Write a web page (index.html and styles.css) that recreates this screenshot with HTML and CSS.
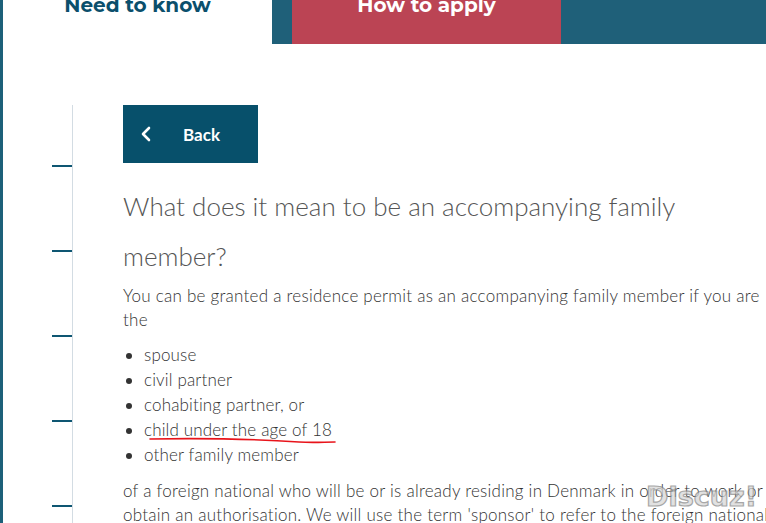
FILE: index.html
```html
<!DOCTYPE html>
<html>
<head>
  <meta charset="utf-8">
  <title>Accompanying family member</title>
  <link rel="stylesheet" href="styles.css">
</head>
<body>
  <div class="tabs">
    <div class="tab tab-know"><span>Need to know</span></div>
    <div class="tab-gap"></div>
    <div class="tab tab-apply"><span>How to apply</span></div>
    <div class="tab-rest"></div>
  </div>

  <div class="page">
    <div class="rail">
      <div class="tick"></div>
      <div class="tick"></div>
      <div class="tick"></div>
      <div class="tick"></div>
      <div class="tick"></div>
    </div>

    <div class="main">
      <a class="back-btn" href="#">
        <svg class="chev" width="10" height="16" viewBox="0 0 10 16">
          <path d="M8 2 L2 8 L8 14" fill="none" stroke="#fff" stroke-width="2.6" stroke-linecap="round" stroke-linejoin="round"/>
        </svg>
        <span>Back</span>
      </a>

      <h2 class="title">What does it mean to be an accompanying family member?</h2>

      <p class="text intro">You can be granted a residence permit as an accompanying family member if you are the</p>

      <ul class="list">
        <li>spouse</li>
        <li>civil partner</li>
        <li>cohabiting partner, or</li>
        <li class="marked">child under the age of 18
          <svg class="scribble" width="190" height="10" viewBox="0 0 190 10">
            <path d="M1 2 C60 1 120 3 150 5 C165 6 175 5 186 5" fill="none" stroke="#e8141b" stroke-width="1.6" stroke-linecap="round"/>
          </svg>
        </li>
        <li>other family member</li>
      </ul>

      <p class="text outro">of a foreign national who will be or is already residing in Denmark in order to work or obtain an authorisation. We will use the term 'sponsor' to refer to the foreign national that</p>
    </div>
  </div>

  <div class="watermark">Discuz!</div>
</body>
</html>
```

FILE: styles.css
```css
body{
    margin:0;
    width:766px;
    height:523px;
    overflow:hidden;
    border-left:3px solid #1d6079;
    box-sizing:border-box;
    font-family:"Lato","Noto Sans",sans-serif;
    background:#fff;
    position:relative;
}

.tabs{
    display:flex;
    height:44px;
}

.tab{
    width:269px;
    flex-shrink:0;
    display:flex;
    justify-content:center;
    align-items:flex-start;
    font-family:"Montserrat","Lato",sans-serif;
    font-weight:700;
    font-size:20px;
    overflow:hidden;
}

.tab span{
    margin-top:-7px;
    line-height:24px;
}

.tab-know{
    color:#0b4f6c;
    background:#fff;
}

.tab-gap{
    width:20px;
    flex-shrink:0;
    background:#1f6079;
}

.tab-apply{
    color:#fff;
    background:#bb4454;
}

.tab-rest{
    flex:1;
    background:#1f6079;
}

.page{
    display:flex;
}

.rail{
    width:70px;
    flex-shrink:0;
    margin-top:61px;
    border-right:1px solid #d3dce3;
    display:flex;
    flex-direction:column;
    align-items:flex-end;
    padding-top:60px;
    gap:83px;
    height:600px;
    box-sizing:border-box;
}

.tick{
    width:20px;
    height:2px;
    background:#0e5672;
}

.main{
    padding-left:50px;
    padding-top:61px;
    flex:1;
    min-width:0;
    color:#333;
}

.back-btn{
    display:flex;
    align-items:center;
    width:135px;
    height:58px;
    background:#07506b;
    color:#fff;
    text-decoration:none;
    font-weight:700;
    font-size:17px;
    box-sizing:border-box;
    padding-left:18px;
}

.back-btn .chev{
    margin-right:32px;
}

.title{
    font-weight:300;
    font-size:26px;
    line-height:50px;
    color:#555;
    margin:18px 0 0;
    width:600px;
}

.text{
    font-size:17px;
    font-weight:300;
    letter-spacing:0.25px;
    line-height:24px;
    margin:0;
    width:645px;
}

.intro{
    margin-top:3px;
}

/* runs past the right edge, as on the original page */
.outro{
    width:686px;
}

.list{
    margin:10px 0 12px;
    padding-left:21px;
    font-size:17px;
    font-weight:300;
    letter-spacing:0.15px;
    line-height:25px;
}

.marked{
    position:relative;
}

.scribble{
    position:absolute;
    left:5px;
    top:20px;
}

.watermark{
    position:absolute;
    left:643px;
    top:481px;
    font-family:"DejaVu Sans",sans-serif;
    font-weight:700;
    font-size:27px;
    color:#d8d8d8;
    opacity:.75;
    -webkit-text-stroke:1.2px #8a8a8a;
}
```
